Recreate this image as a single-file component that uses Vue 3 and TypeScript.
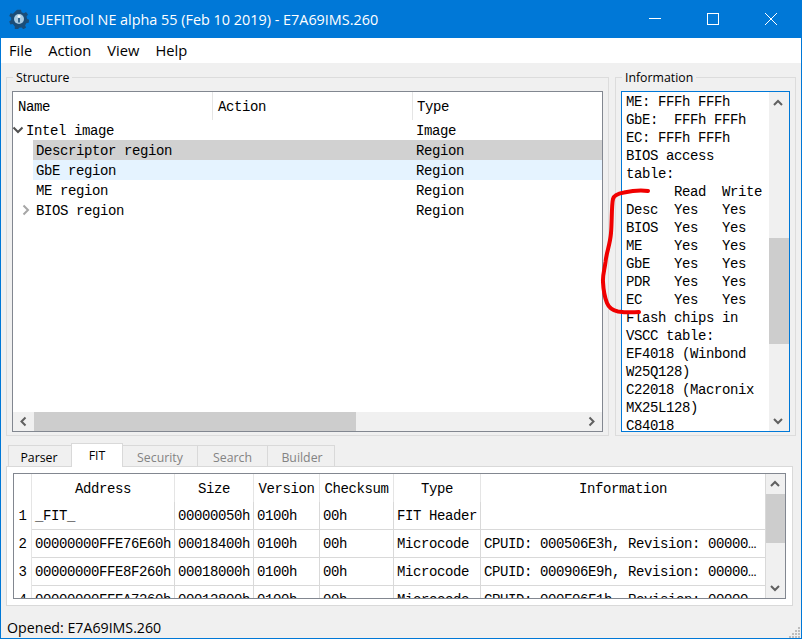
<script setup lang="ts">
const menus = ['File', 'Action', 'View', 'Help']
const treeRows = [
  { name: 'Intel image', type: 'Image', cls: 'lvl0', arrow: 'down' },
  { name: 'Descriptor region', type: 'Region', cls: 'lvl1 selected', arrow: '' },
  { name: 'GbE region', type: 'Region', cls: 'lvl1 hovered', arrow: '' },
  { name: 'ME region', type: 'Region', cls: 'lvl1', arrow: '' },
  { name: 'BIOS region', type: 'Region', cls: 'lvl1', arrow: 'right' },
]
const infoText = `ME: FFFh FFFh
GbE:  FFFh FFFh
EC: FFFh FFFh
BIOS access
table:
      Read  Write
Desc  Yes   Yes
BIOS  Yes   Yes
ME    Yes   Yes
GbE   Yes   Yes
PDR   Yes   Yes
EC    Yes   Yes
Flash chips in
VSCC table:
EF4018 (Winbond
W25Q128)
C22018 (Macronix
MX25L128)
C84018`
const tabs = [
  { label: 'Parser', cls: 'tab-parser' },
  { label: 'FIT', cls: 'tab-fit active' },
  { label: 'Security', cls: 'tab-security off' },
  { label: 'Search', cls: 'tab-search off' },
  { label: 'Builder', cls: 'tab-builder off' },
]
const heads = ['Address', 'Size', 'Version', 'Checksum', 'Type', 'Information']
const rows = [
  ['_FIT_', '00000050h', '0100h', '00h', 'FIT Header', ''],
  ['00000000FFE76E60h', '00018400h', '0100h', '00h', 'Microcode', 'CPUID: 000506E3h, Revision: 00000…'],
  ['00000000FFE8F260h', '00018000h', '0100h', '00h', 'Microcode', 'CPUID: 000906E9h, Revision: 00000…'],
  ['00000000FFEA7260h', '00012800h', '0100h', '00h', 'Microcode', 'CPUID: 000F06F1h, Revision: 00000…'],
]
</script>

<template>
  <div class="window">
    <header class="titlebar">
      <svg class="logo" width="20" height="20" viewBox="0 0 20 20">
        <path d="M8 .8h4l.6 2.400 2.300 1 2.100-1.300 2 2.700-1.500 2 .7 2.400 2 .8-.5 3-2.400.4-1.200 2.200 1 2.200-2.800 1.700-1.700-1.800-2.500.2-1.300 2-3-.8v-2.400L3.800 15l-2.400.4-1.200-3 2-1.400V8.600l-2-1.500 1.300-2.900 2.400.5 1.800-1.700z" fill="#1b4d78" />
        <circle cx="10" cy="10" r="5" fill="#a8cbe3" />
        <path d="M10 7v6.500" stroke="#1b4d78" stroke-width="1.600" fill="none" />
        <circle cx="10" cy="7.500" r="1.500" fill="#f4fafe" />
      </svg>
      <span class="title">UEFITool NE alpha 55 (Feb 10 2019) - E7A69IMS.260</span>
      <div class="winbtns">
        <svg width="58" height="38" viewBox="0 0 58 38"><path d="M23 18.500h12" stroke="#fff" fill="none" /></svg>
        <svg width="58" height="38" viewBox="0 0 58 38"><rect x="23.500" y="13.500" width="11" height="11" stroke="#fff" fill="none" /></svg>
        <svg width="58" height="38" viewBox="0 0 58 38"><path d="M23 13l12 12M35 13l-12 12" stroke="#fff" fill="none" /></svg>
      </div>
    </header>
    <nav class="menubar">
      <span v-for="m in menus" :key="m" class="menu">{{ m }}</span>
    </nav>

    <main class="content">
      <section class="top">
        <fieldset class="group group-structure">
          <legend>Structure</legend>
          <div class="tree">
            <div class="tree-head">
              <span class="th th-name">Name</span>
              <span class="th th-action">Action</span>
              <span class="th th-type">Type</span>
            </div>
            <div class="tree-body">
              <div v-for="r in treeRows" :key="r.name" class="tree-row" :class="r.cls">
                <svg v-if="r.arrow === 'down'" class="arrow arrow-down" width="12" height="8" viewBox="0 0 12 8"><path d="M1.500 1.500l4.500 4.500 4.500-4.500" stroke="#505050" stroke-width="2" fill="none" /></svg>
                <svg v-if="r.arrow === 'right'" class="arrow arrow-right" width="8" height="12" viewBox="0 0 8 12"><path d="M1.500 1.500l4.500 4.500-4.500 4.500" stroke="#a6a6a6" stroke-width="2" fill="none" /></svg>
                <span class="cell-name">{{ r.name }}</span>
                <span class="cell-type">{{ r.type }}</span>
              </div>
            </div>
            <div class="hscroll">
              <svg width="21" height="19" viewBox="0 0 21 19"><path d="M12.500 5.500l-4 4 4 4" stroke="#606060" stroke-width="2" fill="none" /></svg>
              <div class="hthumb"></div>
              <svg class="hright" width="20" height="19" viewBox="0 0 20 19"><path d="M7.500 5.500l4 4-4 4" stroke="#606060" stroke-width="2" fill="none" /></svg>
            </div>
          </div>
        </fieldset>
        <fieldset class="group group-info">
          <legend>Information</legend>
          <div class="info">
            <pre class="info-text">{{ infoText }}</pre>
            <div class="vscroll">
              <svg width="20" height="20" viewBox="0 0 20 20"><path d="M5 13l4-4 4 4" stroke="#606060" stroke-width="2" fill="none" /></svg>
              <div class="vthumb"></div>
              <svg class="vdown" width="20" height="20" viewBox="0 0 20 20"><path d="M5 8l4 4 4-4" stroke="#606060" stroke-width="2" fill="none" /></svg>
            </div>
          </div>
        </fieldset>
      </section>

      <section class="tabs">
        <div class="tabbar">
          <span v-for="t in tabs" :key="t.label" class="tab" :class="t.cls">{{ t.label }}</span>
        </div>
        <div class="pane">
          <div class="fit">
            <div class="fit-table">
              <div class="fit-row fit-header">
                <span class="rowhead"></span>
                <span v-for="h in heads" :key="h" class="fit-th">{{ h }}</span>
              </div>
              <div v-for="(r, i) in rows" :key="i" class="fit-row fit-data">
                <span class="rowhead">{{ i + 1 }}</span>
                <span v-for="(c, j) in r" :key="j" class="fit-td">{{ c }}</span>
              </div>
            </div>
            <div class="vscroll fit-scroll">
              <svg width="20" height="20" viewBox="0 0 20 20"><path d="M5 12l4-4 4 4" stroke="#606060" stroke-width="2" fill="none" /></svg>
              <div class="fit-thumb"></div>
              <svg class="vdown" width="20" height="20" viewBox="0 0 20 20"><path d="M5 8l4 4 4-4" stroke="#606060" stroke-width="2" fill="none" /></svg>
            </div>
          </div>
        </div>
      </section>
    </main>

    <footer class="status">
      <span>Opened: E7A69IMS.260</span>
      <svg class="grip" width="12" height="12" viewBox="0 0 12 12" fill="#bdbdbd">
        <rect x="9" y="1" width="2" height="2" /><rect x="6" y="4" width="2" height="2" /><rect x="9" y="4" width="2" height="2" />
        <rect x="3" y="7" width="2" height="2" /><rect x="6" y="7" width="2" height="2" /><rect x="9" y="7" width="2" height="2" />
        <rect x="0" y="10" width="2" height="2" /><rect x="3" y="10" width="2" height="2" /><rect x="6" y="10" width="2" height="2" /><rect x="9" y="10" width="2" height="2" />
      </svg>
    </footer>

    <svg class="scribble" width="60" height="140" viewBox="595 185 60 140">
      <path d="M647 191C640 190 630 191 623 192.500C617 193.500 613 195 612 199C610.500 205 611 222 610 233C609 245 605.500 252 604.500 262C603.500 270 601.500 275 602 282C602.500 292 604 298 606 303C608 308 612 310.500 617 311.500C624 312.500 632 312.500 638 312" stroke="#f00000" stroke-width="4" fill="none" stroke-linecap="round" stroke-linejoin="round" />
    </svg>
  </div>
</template>

<style>
html, body { margin: 0; padding: 0; background: #f0f0f0; }
</style>

<style scoped>
.window {
  position: relative;
  width: 802px;
  height: 639px;
  box-sizing: border-box;
  border: 1px solid #0078d7;
  border-top: 0;
  background: #f0f0f0;
  display: flex;
  flex-direction: column;
  overflow: hidden;
  font-family: "Open Sans", "Noto Sans", sans-serif;
  font-size: 12.300px;
  color: #000;
}
.titlebar {
  height: 38px;
  flex: none;
  margin: 0 -1px;
  background: #0078d7;
  display: flex;
  align-items: center;
  padding: 0 2px 0 9px;
}
.logo { flex: none; }
.title {
  margin-left: 6px;
  color: #fff;
  font-size: 14.400px;
  white-space: nowrap;
}
.winbtns { margin-left: auto; display: flex; }
.winbtns svg { display: block; }
.menubar {
  height: 25px;
  flex: none;
  box-sizing: border-box;
  background: #fff;
  display: flex;
  align-items: center;
  padding: 0 0 2px 8px;
  gap: 16px;
  font-size: 14.700px;
}
.content {
  flex: 1;
  min-height: 0;
  padding: 7px 5px 0 5px;
  display: flex;
  flex-direction: column;
}
.top { display: flex; height: 366px; flex: none; gap: 6px; }
.group {
  margin: 0;
  padding: 0 5px 3px 5px;
  border: 1px solid #dcdcdc;
  min-width: 0;
  box-sizing: border-box;
  height: 100%;
  display: flex;
  flex-direction: column;
}
.group legend {
  padding: 0 3px;
  margin-left: 1px;
  line-height: 15px;
}
.group-structure { width: 603px; flex: none; }
.group-info { width: 181px; flex: none; }
.tree {
  height: 341px;
  margin-top: 6px;
  box-sizing: border-box;
  border: 1px solid #828790;
  background: #fff;
  display: flex;
  flex-direction: column;
  font-family: "Liberation Mono", monospace;
  font-size: 14px;
  letter-spacing: -0.4px;
}
.tree-head { display: flex; height: 28px; flex: none; align-items: center; }
.th { box-sizing: border-box; padding: 2px 0 0 5px; height: 100%; display: flex; align-items: center; border-right: 1px solid #e5e5e5; }
.th-name { width: 200px; }
.th-action { width: 200px; }
.th-type { flex: 1; border-right: 0; padding-left: 4px; }
.tree-body { flex: 1; min-height: 0; }
.tree-row { position: relative; box-sizing: border-box; height: 20px; padding-top: 2px; display: flex; align-items: center; white-space: nowrap; }
.lvl0 { padding-left: 13px; }
.lvl1 { margin-left: 20px; padding-left: 3px; }
.selected { background: #d1d1d1; }
.hovered { background: #e5f3ff; }
.arrow { position: absolute; }
.arrow-down { left: -1px; top: 6px; }
.arrow-right { left: -11px; top: 4px; }
.lvl0 .cell-name { flex: none; width: 390px; }
.lvl1 .cell-name { flex: none; width: 380px; }
.hscroll {
  height: 19px;
  flex: none;
  background: #f0f0f0;
  display: flex;
  align-items: center;
}
.hscroll svg { flex: none; display: block; }
.hthumb { width: 322px; height: 100%; background: #cdcdcd; }
.hright { margin-left: auto; }
.info {
  height: 341px;
  margin-top: 6px;
  box-sizing: border-box;
  border: 1px solid #0078d7;
  background: #fff;
  display: flex;
  overflow: hidden;
}
.info-text {
  flex: 1;
  margin: 0;
  padding: 1px 0 0 4px;
  overflow: hidden;
  font-family: "Liberation Mono", monospace;
  font-size: 14px;
  letter-spacing: -0.4px;
  line-height: 18px;
}
.vscroll {
  width: 20px;
  flex: none;
  background: #f0f0f0;
  display: flex;
  flex-direction: column;
}
.vscroll svg { display: block; flex: none; }
.vthumb { height: 106px; margin-top: 126px; background: #cdcdcd; }
.vdown { margin-top: auto; }
.tabs { margin-top: 7px; display: flex; flex-direction: column; width: 787px; }
.tabbar { display: flex; height: 23px; align-items: flex-end; padding-left: 2px; flex: none; position: relative; z-index: 1; }
.tab {
  box-sizing: border-box;
  height: 21px;
  padding: 2px 2px 0 0;
  display: flex;
  align-items: center;
  justify-content: center;
  border: 1px solid #d9d9d9;
  border-bottom: 0;
  background: #f0f0f0;
  margin-right: -1px;
}
.tab-parser { width: 64px; }
.tab-fit { width: 52px; }
.tab-security { width: 76px; padding-right: 0; }
.tab-search { width: 71px; padding-right: 0; }
.tab-builder { width: 68px; padding: 2px 0 0 2px; }
.active { height: 24px; background: #fff; margin-bottom: -1px; padding: 0; position: relative; z-index: 2; }
.off { color: #838383; }
.pane {
  box-sizing: border-box;
  height: 140px;
  border: 1px solid #d9d9d9;
  background: #fff;
  padding: 6px;
}
.fit {
  height: 126px;
  box-sizing: border-box;
  border: 1px solid #828790;
  display: flex;
  background: #fff;
  overflow: hidden;
}
.fit-table {
  width: 752px;
  flex: none;
  font-family: "Liberation Mono", monospace;
  font-size: 14px;
  letter-spacing: -0.4px;
  overflow: hidden;
  border-right: 1px solid #d9d9d9;
  box-sizing: border-box;
}
.fit-row { display: grid; grid-template-columns: 18px 143px 79px 66px 74px 87px 1fr; }
.fit-header { height: 28px; box-sizing: border-box; }
.fit-data { height: 28px; }
.rowhead { display: flex; align-items: center; justify-content: center; border-right: 1px solid #e5e5e5; box-sizing: border-box; }
.fit-th { display: flex; align-items: center; justify-content: center; padding-top: 2px; border-right: 1px solid #e5e5e5; box-sizing: border-box; }
.fit-th:last-child { border-right: 0; }
.fit-td {
  box-sizing: border-box;
  display: flex;
  align-items: center;
  padding-left: 3px;
  border-right: 1px solid #d9d9d9;
  border-bottom: 1px solid #d9d9d9;
  white-space: nowrap;
  overflow: hidden;
}
.fit-td:last-child { border-right: 0; }
.fit-scroll { width: 20px; }
.fit-thumb { height: 49px; background: #cdcdcd; }
.status {
  height: 32px;
  flex: none;
  box-sizing: border-box;
  display: flex;
  align-items: center;
  padding: 10px 0 0 6px;
  font-size: 14.200px;
  position: relative;
}
.grip { position: absolute; right: 0; bottom: 0; }
.scribble { position: absolute; left: 595px; top: 185px; pointer-events: none; }
</style>
